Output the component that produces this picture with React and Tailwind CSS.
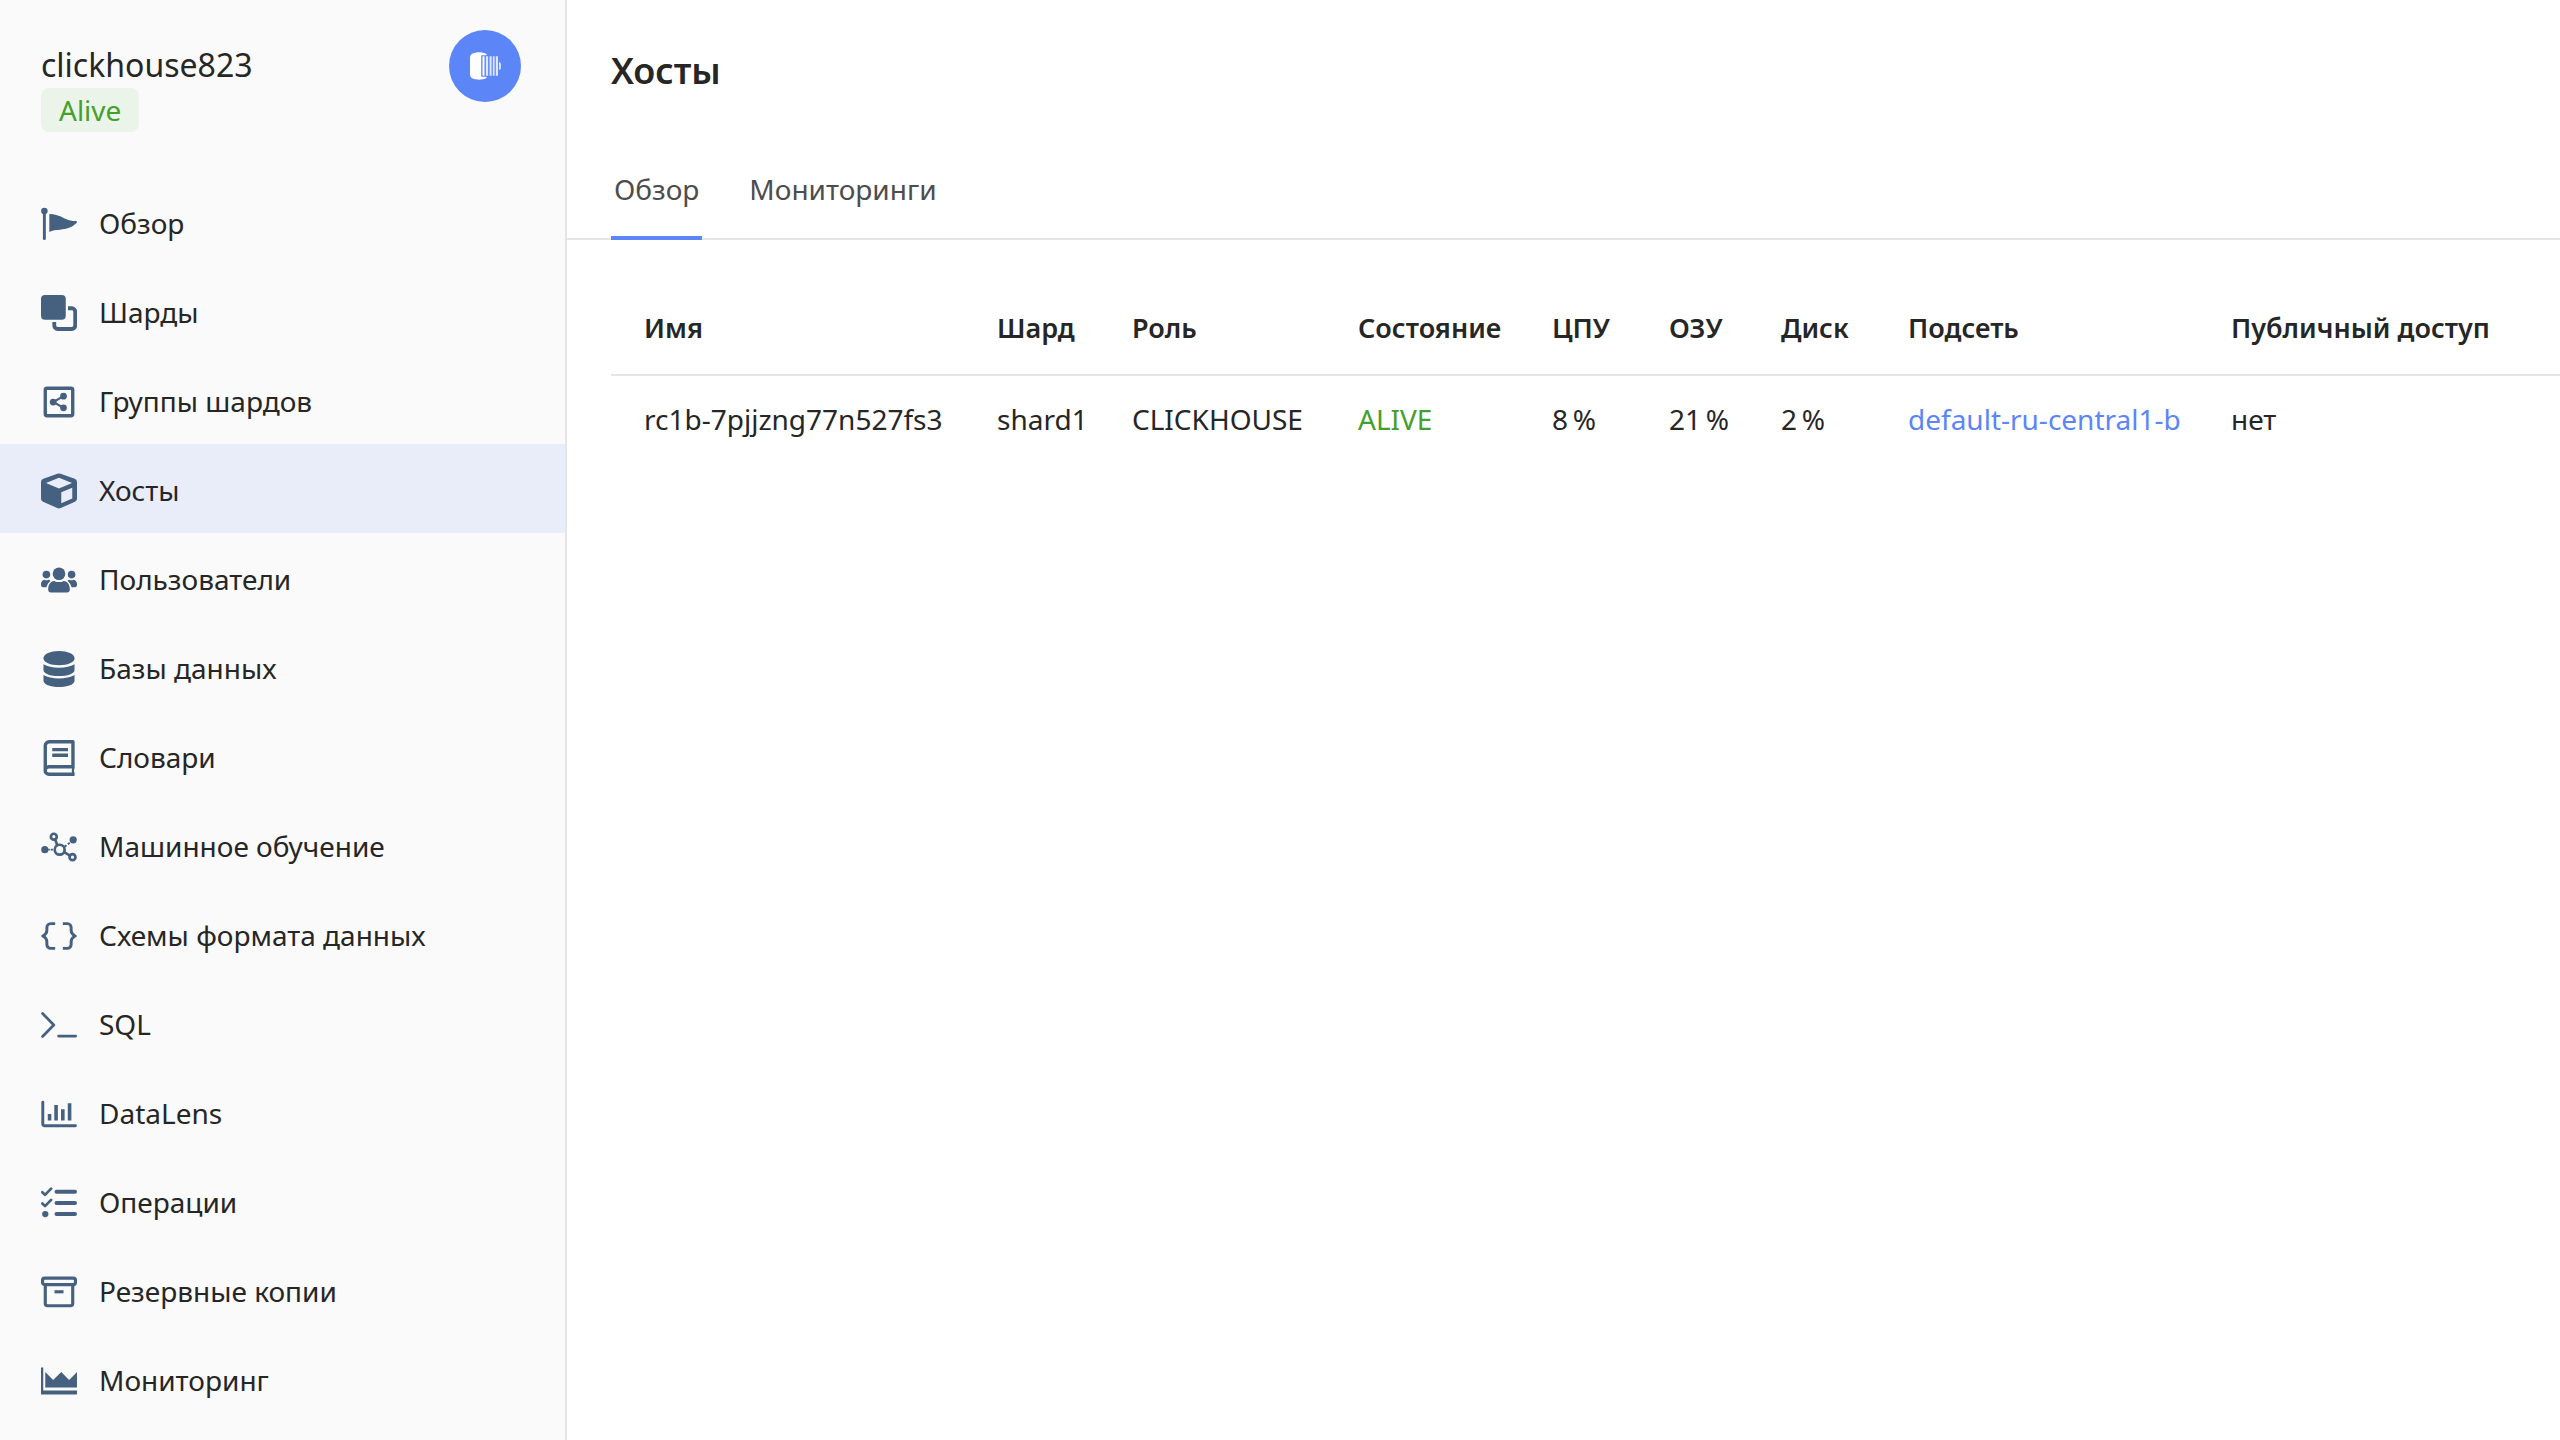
import React, { useState } from "react";

const Svg = ({ children }) => (
  <svg viewBox="0 0 16 16" className="h-9 w-9 shrink-0 text-[#45617f]" fill="currentColor" aria-hidden="true">
    {children}
  </svg>
);

const line = {
  fill: "none",
  stroke: "currentColor",
  strokeLinecap: "round",
  strokeLinejoin: "round",
};

const icons = {
  flag: (
    <Svg>
      <circle cx="1.5" cy="2.2" r="1.45" />
      <path {...line} strokeWidth="1.3" d="M1.5 2.5v12" />
      <path d="M3.7 3.6c2.4 0 4.5.7 6.8 2 1.9 1 3.4 1.1 5 1.1.5 0 .6.5.3.9-2.2 2-4.3 2.8-7.3 2.9-2 .1-3.5.3-4.8 1z" />
    </Svg>
  ),
  shards: (
    <Svg>
      <rect width="11" height="11" rx="1.8" />
      <path {...line} strokeLinecap="butt" strokeWidth="1.7" d="M12 5.9h1.7a1.5 1.5 0 0 1 1.5 1.5v6.2a1.5 1.5 0 0 1-1.5 1.5H7.4a1.5 1.5 0 0 1-1.5-1.5V12" />
    </Svg>
  ),
  groups: (
    <Svg>
      <rect {...line} strokeWidth="1.5" x="1.9" y="1.9" width="12.2" height="12.2" rx=".8" />
      <path {...line} strokeWidth=".9" d="M10 5.4 5.5 8l4.5 2.6" />
      <circle cx="5.4" cy="8" r="1.5" />
      <circle cx="10" cy="5.4" r="1.5" />
      <circle cx="10" cy="10.6" r="1.5" />
    </Svg>
  ),
  hosts: (
    <Svg>
      <path
        fillRule="evenodd"
        d="M7.3.3a2 2 0 0 1 1.4 0l6.3 2.3a1.5 1.5 0 0 1 1 1.4v7.4a1.5 1.5 0 0 1-.9 1.4l-6.3 2.8a2 2 0 0 1-1.6 0L.9 12.8a1.5 1.5 0 0 1-.9-1.4V4a1.5 1.5 0 0 1 1-1.4zM2.2 4.4 8 6.9l5.8-2.5L8 2.1zM9 8.5v4.9l4.9-2.1V6.5z"
      />
    </Svg>
  ),
  users: (
    <Svg>
      <circle cx="8" cy="5.2" r="2.8" />
      <circle cx="2.4" cy="5.6" r="1.7" />
      <circle cx="13.6" cy="5.6" r="1.7" />
      <path d="M5.9 8.4c1.3.7 2.9.7 4.2 0 1.7.2 2.7 1.7 2.7 3.5v.4c0 .7-.5 1.2-1.2 1.2H4.4c-.7 0-1.2-.5-1.2-1.2v-.4c0-1.8 1-3.3 2.7-3.5z" />
      <path d="M1.5 7.9c.6.3 1.2.3 1.8 0 .4 0 .7.2.9.5-.9.7-1.5 1.6-1.8 2.8H1a1 1 0 0 1-1-1v-.4c0-1 .6-1.8 1.5-1.9zM14.5 7.9c-.6.3-1.2.3-1.8 0-.4 0-.7.2-.9.5.9.7 1.5 1.6 1.8 2.8H15a1 1 0 0 0 1-1v-.4c0-1-.6-1.8-1.5-1.9z" />
    </Svg>
  ),
  databases: (
    <Svg>
      <path d="M1.1 3.2C1.1 1.3 4.2 0 8 0s6.9 1.3 6.9 3.2S11.8 6.3 8 6.3 1.1 5.1 1.1 3.2z" />
      <path d="M1.1 5.9C2.8 7 5.2 7.4 8 7.4s5.2-.4 6.9-1.5v2.6c0 1.5-3.1 2.6-6.9 2.6s-6.9-1.1-6.9-2.6z" />
      <path d="M1.1 10.7c1.7 1.1 4.1 1.5 6.9 1.5s5.2-.4 6.9-1.5v2.5c0 1.7-3.1 2.8-6.9 2.8s-6.9-1.1-6.9-2.8z" />
    </Svg>
  ),
  dictionaries: (
    <Svg>
      <path {...line} strokeLinecap="butt" strokeWidth="1.5" d="M14.9 11.9H3.5a1.6 1.6 0 0 0 0 3.3h11.4M1.9 13.5V2.6A1.8 1.8 0 0 1 3.7.8h10.5v11M5 4.3h7M5 6.8h7" />
      <path {...line} strokeWidth="1" strokeLinecap="butt" d="M14.4 11.9c-.3 1.2-.3 2.2 0 3.3" />
    </Svg>
  ),
  ml: (
    <Svg>
      <circle cx="1.7" cy="9.2" r="1.6" />
      <circle cx="14.3" cy="4.8" r="1.6" />
      <g {...line} strokeWidth="1.2">
        <circle cx="8.3" cy="9.2" r="2.2" />
        <circle cx="5.7" cy="3.4" r="1.3" />
        <circle cx="14" cy="12.5" r="1.3" />
        <path d="m6.3 4.7.9 2.4M10.3 10.3l2.4 1.4" />
        <path strokeWidth=".8" strokeLinecap="butt" d="M3.2 9.2h.7M4.3 9.2h1M10.5 7.9l.8-.7M11.9 6.8l.9-.7" />
      </g>
    </Svg>
  ),
  schemas: (
    <Svg>
      <path {...line} strokeLinecap="butt" strokeWidth="1.3" d="M6.3 2.5h-2a1.7 1.7 0 0 0-1.7 1.7v1.4C2.6 7 1.6 7.6.8 8c.8.4 1.8 1 1.8 2.4v1.4a1.7 1.7 0 0 0 1.7 1.7h2M9.7 2.5h2a1.7 1.7 0 0 1 1.7 1.7v1.4c0 1.4 1 2 1.8 2.4-.8.4-1.8 1-1.8 2.4v1.4a1.7 1.7 0 0 1-1.7 1.7h-2" />
    </Svg>
  ),
  sql: (
    <Svg>
      <path {...line} strokeWidth="1.2" d="M.7 2.9 5.7 8l-5 5.1M7.8 12.9h7.6" />
    </Svg>
  ),
  datalens: (
    <Svg>
      <path {...line} strokeWidth="1.3" d="M.8 2.8v9.7a.7.7 0 0 0 .7.7h13.8" />
      <path {...line} strokeLinecap="butt" strokeWidth="1.6" d="M3.8 8v2.9M6.7 4v6.9M9.7 5.9v5M12.7 3.2v7.7" />
    </Svg>
  ),
  operations: (
    <Svg>
      <path {...line} strokeWidth="1.2" d="m.6 3.2 1.2 1.2 2.7-2.8M.6 8.2l1.2 1.2 2.7-2.8" />
      <circle cx="1.9" cy="12.9" r="1.4" />
      <path {...line} strokeWidth="1.8" d="M6.9 3h8.2M6.9 8h8.2M6.9 12.9h8.2" />
    </Svg>
  ),
  backups: (
    <Svg>
      <path {...line} strokeWidth="1.4" d="M1.9 5v8.1a1 1 0 0 0 1 1h10.2a1 1 0 0 0 1-1V5" />
      <rect {...line} strokeWidth="1.4" x=".7" y="1.8" width="14.6" height="2.9" rx=".9" />
      <path {...line} strokeLinecap="butt" strokeWidth="1.4" d="M6 7.9h4" />
    </Svg>
  ),
  monitoring: (
    <Svg>
      <path d="M0 2h1v10.2h15V14H0z" />
      <path d="M1.9 4l3.5 3.5L9 4l3.5 3.5L16 4v6.9H1.9z" />
    </Svg>
  ),
};

const menu = [
  { icon: "flag", label: "Обзор" },
  { icon: "shards", label: "Шарды" },
  { icon: "groups", label: "Группы шардов" },
  { icon: "hosts", label: "Хосты", active: true },
  { icon: "users", label: "Пользователи" },
  { icon: "databases", label: "Базы данных" },
  { icon: "dictionaries", label: "Словари" },
  { icon: "ml", label: "Машинное обучение" },
  { icon: "schemas", label: "Схемы формата данных" },
  { icon: "sql", label: "SQL" },
  { icon: "datalens", label: "DataLens" },
  { icon: "operations", label: "Операции" },
  { icon: "backups", label: "Резервные копии" },
  { icon: "monitoring", label: "Мониторинг" },
];

const columns = [
  { title: "Имя", width: "w-[353px]" },
  { title: "Шард", width: "w-[135px]" },
  { title: "Роль", width: "w-[226px]" },
  { title: "Состояние", width: "w-[194px]" },
  { title: "ЦПУ", width: "w-[117px]" },
  { title: "ОЗУ", width: "w-[112px]" },
  { title: "Диск", width: "w-[127px]" },
  { title: "Подсеть", width: "w-[323px]" },
  { title: "Публичный доступ", width: "w-auto" },
];

const hosts = [
  {
    name: "rc1b-7pjjzng77n527fs3",
    shard: "shard1",
    role: "CLICKHOUSE",
    state: "ALIVE",
    cpu: 8,
    ram: 21,
    disk: 2,
    subnet: "default-ru-central1-b",
    publicAccess: false,
  },
];

const ClusterLogo = () => (
  <div className="flex h-[72px] w-[72px] items-center justify-center rounded-full bg-[#5c85f7]">
    <svg viewBox="0 0 32 28" className="h-7 w-8" fill="#fff" aria-hidden="true">
      <path d="M5 1c3-1 9-1 12.500 1v1.200h-5.300v21.600h5.300V26c-3.500 2-9.500 2-12.500 1-3-.9-4-2.400-4-5V6c0-2.600 1-4.100 4-5z" />
      <path d="M13.500 4.300h2v19.400h-2z" />
      <path opacity=".8" d="M16.900 4.300h2.200v19.400h-2.200zM20.600 4.300h2v19.400h-2zM23.800 4.300h1.800v19.400h-1.800zM26.800 4.300h2.200v19.400h-2.200z" />
      <path d="M30.200 10.200c1 0 1.500.6 1.500 1.500v4.600c0 .9-.5 1.500-1.500 1.500z" />
    </svg>
  </div>
);

const Sidebar = () => (
  <aside className="w-[567px] shrink-0 border-r-2 border-[#e5e5e5] bg-[#fafafa]">
    {/* Cluster header */}
    <div className="flex h-[177px] items-start justify-between pt-[30px] pr-11 pl-[41px]">
      <div className="pt-3">
        <div className="text-[32px] leading-[46px]">clickhouse823</div>
        <span className="inline-block rounded-lg bg-[#eaf4e8] px-[18px] leading-[44px] text-[#459f2c]">
          Alive
        </span>
      </div>
      <ClusterLogo />
    </div>
    {/* Menu */}
    <nav>
      {menu.map((item) => (
        <a
          key={item.label}
          href="#"
          aria-current={item.active ? "page" : undefined}
          className={`flex h-[89px] items-center gap-[22px] pt-1 pl-[41px] ${
            item.active ? "bg-[#e9edf9]" : ""
          }`}
        >
          {icons[item.icon]}
          <span className="pb-[2px]">{item.label}</span>
        </a>
      ))}
    </nav>
  </aside>
);

const HostsTable = () => (
  <table className="mt-11 w-full table-fixed text-left whitespace-nowrap [&_td]:pb-[2px] [&_td]:pl-[33px] [&_th]:pb-[2px] [&_th]:pl-[33px]">
    <thead>
      <tr className="h-[91px] border-b-2 border-[#e5e5e5]">
        {columns.map((column) => (
          <th key={column.title} className={`${column.width} text-[27px] font-semibold`}>
            {column.title}
          </th>
        ))}
      </tr>
    </thead>
    <tbody>
      {hosts.map((host) => (
        <tr key={host.name} className="h-[89px]">
          <td>{host.name}</td>
          <td>{host.shard}</td>
          <td>{host.role}</td>
          <td className="text-[#459f2c]">{host.state}</td>
          <td>{host.cpu}&thinsp;%</td>
          <td>{host.ram}&thinsp;%</td>
          <td>{host.disk}&thinsp;%</td>
          <td>
            <a href="#" className="text-[#5c85f7]">
              {host.subnet}
            </a>
          </td>
          <td>{host.publicAccess ? "да" : "нет"}</td>
        </tr>
      ))}
    </tbody>
  </table>
);

const App = () => {
  const [tab, setTab] = useState("Обзор");

  return (
    <div className="flex min-h-screen bg-white font-['Noto_Sans',sans-serif] text-[28px] leading-10 text-[#262626]">
      <Sidebar />
      <main className="min-w-0 flex-1">
        <h1 className="h-36 pt-[46px] pl-11 text-[36px] leading-[50px] font-semibold">Хосты</h1>
        {/* Tabs */}
        <div role="tablist" className="flex gap-11 border-b-2 border-[#e5e5e5] pl-11">
          {["Обзор", "Мониторинги"].map((name) => (
            <button
              key={name}
              type="button"
              role="tab"
              aria-selected={tab === name}
              onClick={() => setTab(name)}
              className={`-mb-[2px] h-24 border-b-4 px-[3px] pb-[2px] text-[#4d4d4d] ${
                tab === name ? "border-[#5c85f7]" : "border-transparent"
              }`}
            >
              {name}
            </button>
          ))}
        </div>
        <div className="pl-11">
          <HostsTable />
        </div>
      </main>
    </div>
  );
};

export default App;
